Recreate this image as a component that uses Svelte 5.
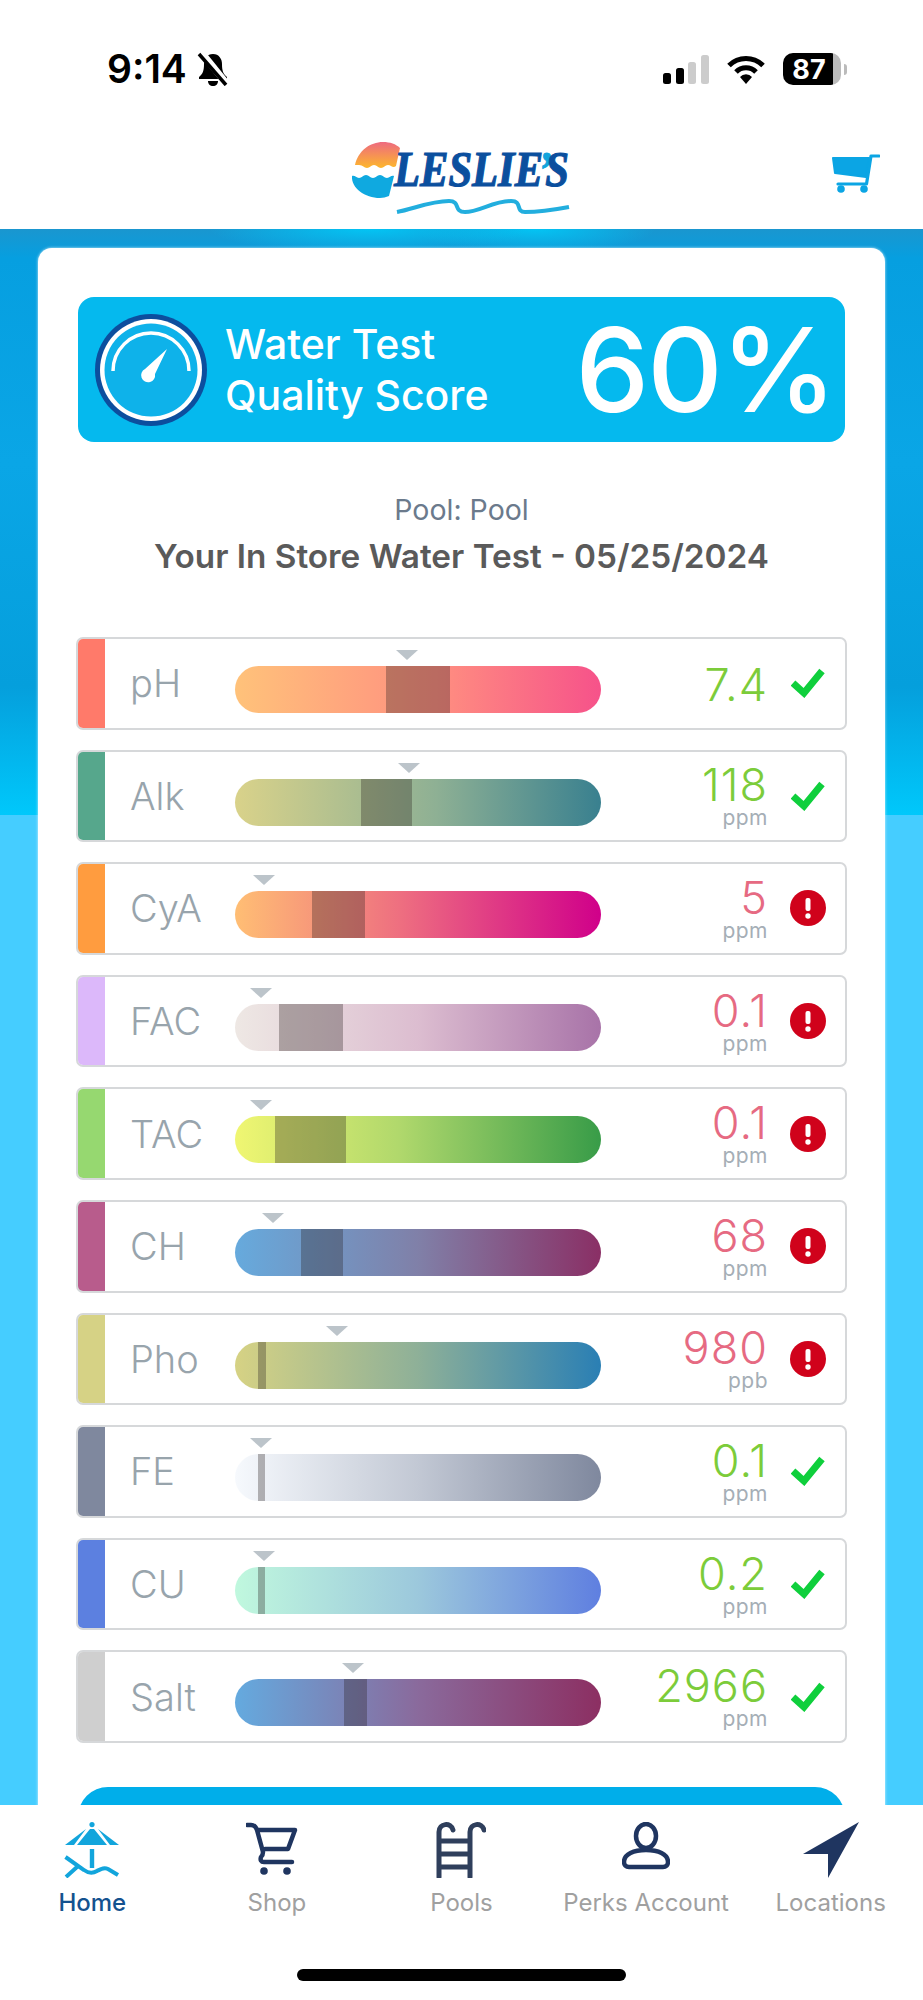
<script>
  const rows = [
    { name: 'pH', swatch: '#ff7a6a', grad: '#ffc27a, #ff8f80 55%, #f6528a', band: [151, 64], tri: 172, value: '7.4', ok: true },
    { name: 'Alk', swatch: '#56a78c', grad: '#d9d28a, #8eb094 55%, #39808f', band: [126, 51], tri: 174, value: '118', unit: 'ppm', ok: true },
    { name: 'CyA', swatch: '#ff9c3f', grad: '#ffbe74, #ee6f80 45%, #d0008a', band: [77, 53], tri: 29, value: '5', unit: 'ppm' },
    { name: 'FAC', swatch: '#dcb8fa', grad: '#eee8e4, #dcbdd0 50%, #a873a8', band: [44, 64], tri: 26, value: '0.1', unit: 'ppm' },
    { name: 'TAC', swatch: '#96d870', grad: '#f0f672, #b0d86c 45%, #389c48', band: [40, 71], tri: 26, value: '0.1', unit: 'ppm' },
    { name: 'CH', swatch: '#b85c8c', grad: '#66aadd, #8080a8 50%, #8a2f65', band: [66, 42], tri: 38, value: '68', unit: 'ppm' },
    { name: 'Pho', swatch: '#d6d285', grad: '#d6d284, #8eb098 50%, #2a7fb4', band: [23, 8], tri: 102, value: '980', unit: 'ppb' },
    { name: 'FE', swatch: '#7f889e', grad: '#f6f9fd, #c2c8d4 50%, #7f889e', band: [23, 7], tri: 26, value: '0.1', unit: 'ppm', ok: true },
    { name: 'CU', swatch: '#5c80e0', grad: '#c0f8de, #9cc8dc 50%, #5f7fe0', band: [23, 7], tri: 29, value: '0.2', unit: 'ppm', ok: true },
    { name: 'Salt', swatch: '#cfcfcf', grad: '#64aadf, #8a6a9c 50%, #8c2f62', band: [109, 23], tri: 118, value: '2966', unit: 'ppm', ok: true }
  ];

  const tabs = ['Home', 'Shop', 'Pools', 'Perks Account', 'Locations'];
</script>

<div class="page">
  <div class="status">
    <div class="clock">
      <span class="time">9:14</span>
      <svg width="32" height="34" viewBox="0 0 32 34">
        <path d="M16 2c-6 0-9 5-9 10 0 6-1 10-5 13v2h28v-2c-4-3-5-7-5-13 0-5-3-10-9-10z" fill="#000" />
        <path d="M11 29h10c0 3-2 5-5 5s-5-2-5-5z" fill="#000" />
        <path d="M4 0l26 32" stroke="#fff" stroke-width="7" />
        <path d="M2 2l27 31" stroke="#000" stroke-width="3.5" />
      </svg>
    </div>
    <div class="indicators">
      <svg width="46" height="29" viewBox="0 0 46 29">
        <rect x="0" y="18" width="8" height="11" rx="2.5" fill="#000" />
        <rect x="13" y="13" width="8" height="16" rx="2.5" fill="#000" />
        <rect x="25" y="7" width="8" height="22" rx="2.5" fill="#ccc" />
        <rect x="38" y="0" width="8" height="29" rx="2.5" fill="#ccc" />
      </svg>
      <svg width="40" height="29" viewBox="0 0 40 29">
        <path d="M3 10.5a24 24 0 0 1 34 0" fill="none" stroke="#000" stroke-width="5" />
        <path d="M10 17a14 14 0 0 1 20 0" fill="none" stroke="#000" stroke-width="5" />
        <path d="M20 29l-6-7a8 8 0 0 1 12 0z" fill="#000" />
      </svg>
      <div class="battery">
        <div class="cell"><span>87</span></div>
        <div class="nub"></div>
      </div>
    </div>
  </div>

  <header class="top">
    <svg class="logo" width="217" height="72" viewBox="0 0 217 72">
      <defs>
        <linearGradient id="sun" x1="0" y1="0" x2="0" y2="1">
          <stop offset="0" stop-color="#ee6a80" />
          <stop offset="1" stop-color="#fdb72c" />
        </linearGradient>
      </defs>
      <path d="M3 23C6 9 18 0 31 0c7 0 13 2 17 6l-4 18c-3 3-5-1-8-1s-4 3-7 3-4-3-7-3-4 3-7 3-4-3-8-3z" fill="url(#sun)" />
      <path d="M0 34c3-1 4 2 7 2s4-3 7-3 4 3 7 3 4-3 7-3 4 3 7 3 4-3 7-2l-5 20c-3 1-6 2-9 2C13 56-1 46 0 34z" fill="#0fa9e0" />
      <text x="42" y="44" font-family="'Liberation Serif', serif" font-weight="700" font-style="italic" font-size="50" fill="#0b4f9e" stroke="#0b4f9e" stroke-width="1.2" textLength="175" lengthAdjust="spacingAndGlyphs">LESLIE<tspan dx="-6" fill="#12a5dc" stroke="#12a5dc">’</tspan><tspan dx="-8">S</tspan></text>
      <path d="M45 70c16-3 34-11 52-11 12 0 4 11 16 11 14 0 28-11 46-11 12 0 4 11 14 11 14 0 28-2 44-5" fill="none" stroke="#22aede" stroke-width="4" />
    </svg>
    <svg class="cart" width="48" height="40" viewBox="0 0 48 40">
      <path d="M1 5H37L34 24 3 20z" fill="#0ba5e4" stroke="#0ba5e4" stroke-width="2" stroke-linejoin="round" />
      <path d="M47 3H39L34.500 31H6" fill="none" stroke="#0ba5e4" stroke-width="3.200" stroke-linejoin="round" stroke-linecap="round" />
      <circle cx="9" cy="36" r="3.800" fill="#0ba5e4" />
      <circle cx="32" cy="36" r="3.800" fill="#0ba5e4" />
    </svg>
  </header>

  <main class="water">
    <section class="card">
      <div class="score">
        <svg width="112" height="112" viewBox="0 0 112 112">
          <circle cx="56" cy="56" r="56" fill="#0c4e9e" />
          <circle cx="56" cy="56" r="51" fill="#fff" />
          <circle cx="56" cy="56" r="46.5" fill="#0eb2ea" />
          <path d="M18 57a38 38 0 0 1 76 0" fill="none" stroke="#fff" stroke-width="3.5" />
          <path d="M72 35L60 60a7 7 0 1 1-10-5z" fill="#fff" />
        </svg>
        <div class="score-title">Water Test<br />Quality Score</div>
        <div class="score-value">60%</div>
      </div>

      <p class="pool">Pool: Pool</p>
      <h1>Your In Store Water Test - 05/25/2024</h1>

      <ul class="tests">
        {#each rows as row}
          <li class="test">
            <span class="swatch" style:background={row.swatch}></span>
            <span class="name">{row.name}</span>
            <div class="track">
              <span class="tri" style:left="{row.tri - 11}px"></span>
              <div class="bar" style:background="linear-gradient(90deg, {row.grad})">
                <span class="band" style:left="{row.band[0]}px" style:width="{row.band[1]}px"></span>
              </div>
            </div>
            <div class="reading" class:good={row.ok}>
              <span class="value">{row.value}</span>
              {#if row.unit}<span class="unit">{row.unit}</span>{/if}
            </div>
            <div class="mark">
              {#if row.ok}
                <svg width="34" height="30" viewBox="0 0 34 30">
                  <path d="M2 15l11 10L31 3" fill="none" stroke="#0fcf3c" stroke-width="7" />
                </svg>
              {:else}
                <svg width="36" height="36" viewBox="0 0 36 36">
                  <circle cx="18" cy="18" r="18" fill="#d0021b" />
                  <rect x="15.5" y="8" width="5" height="13" rx="2" fill="#fff" />
                  <circle cx="18" cy="26" r="2.7" fill="#fff" />
                </svg>
              {/if}
            </div>
          </li>
        {/each}
      </ul>

      <div class="cta"></div>
    </section>
  </main>

  <nav class="tabs">
    {#each tabs as tab, i}
      <div class="tab" class:active={i === 0}>
        <div class="icon">
          {#if i === 0}
            <svg width="56" height="56" viewBox="0 0 56 56">
              <circle cx="28" cy="2.6" r="2.6" fill="#12a5dc" />
              <path d="M1 23L22 7 10 23z" fill="#12a5dc" />
              <path d="M13 23L26 7h4l13 16z" fill="#12a5dc" />
              <path d="M55 23L34 7l12 16z" fill="#12a5dc" />
              <path d="M28 27v19" stroke="#12a5dc" stroke-width="4.4" />
              <path d="M1.5 35L20 48c4 3 8 4 13 1 4-2 7-4 11-2l10 6M2 55l11-10" fill="none" stroke="#12a5dc" stroke-width="4" />
            </svg>
          {:else if i === 1}
            <svg class="shop-icon" width="52" height="54" viewBox="0 0 52 54">
              <path d="M1 3h4c3 0 5 2 6 5l6 22c0 2-1 4-2 5-1 3 0 5 3 5h28M12 8h37l-7 19H19" fill="none" stroke="#1f3560" stroke-width="4.5" stroke-linejoin="round" stroke-linecap="round" />
              <circle cx="18" cy="49" r="3.8" fill="#1f3560" />
              <circle cx="41" cy="49" r="3.8" fill="#1f3560" />
            </svg>
          {:else if i === 2}
            <svg width="50" height="56" viewBox="0 0 50 56">
              <path d="M3 55V10C3 1 15 0 17 8M34 55V10C34 1 46 0 48 8" fill="none" stroke="#2f3f5c" stroke-width="5" stroke-linecap="round" />
              <path d="M3 19h31M3 32h31M3 45h31" stroke="#2f3f5c" stroke-width="5" />
            </svg>
          {:else if i === 3}
            <svg width="48" height="48" viewBox="0 0 48 48">
              <ellipse cx="24" cy="14" rx="10" ry="12" fill="none" stroke="#1f3560" stroke-width="4.5" />
              <path d="M7 45h34c3 0 5-2 5-5 0-8-10-12-22-12S2 32 2 40c0 3 2 5 5 5z" fill="none" stroke="#1f3560" stroke-width="4.5" />
            </svg>
          {:else}
            <svg width="56" height="56" viewBox="0 0 56 56">
              <path d="M56 0L0 32h25v24z" fill="#1f3560" />
            </svg>
          {/if}
        </div>
        <span class="tab-label">{tab}</span>
      </div>
    {/each}
    <div class="home-bar"></div>
  </nav>
</div>

<style>
  :global(body) {
    margin: 0;
    background: #fff;
  }

  .page {
    width: 923px;
    height: 2000px;
    overflow: hidden;
    display: flex;
    flex-direction: column;
    font-family: Inter, "Liberation Sans", sans-serif;
    background: #fff;
  }

  .status {
    height: 118px;
    box-sizing: border-box;
    padding: 50px 76px 0 107px;
    display: flex;
    justify-content: space-between;
    align-items: flex-start;
    flex-shrink: 0;
  }

  .clock {
    display: flex;
    align-items: center;
    gap: 10px;
  }

  .time {
    font-size: 39px;
    line-height: 38px;
    font-weight: 600;
    color: #000;
  }

  .indicators {
    display: flex;
    align-items: center;
    gap: 17px;
    padding-top: 3px;
  }

  .battery {
    display: flex;
    align-items: center;
    gap: 3px;
  }

  .cell {
    width: 58px;
    height: 32px;
    border-radius: 10px;
    background: linear-gradient(90deg, #000 87%, #bbb 87%);
    display: flex;
    align-items: center;
    justify-content: center;
  }

  .cell span {
    color: #fff;
    font-size: 27px;
    font-weight: 700;
    padding-right: 6px;
  }

  .nub {
    width: 3px;
    height: 11px;
    border-radius: 0 3px 3px 0;
    background: #bbb;
  }

  .top {
    height: 111px;
    flex-shrink: 0;
    position: relative;
    display: flex;
    justify-content: center;
    align-items: flex-start;
    padding-top: 24px;
    box-sizing: border-box;
  }

  .logo {
    margin-left: -3px;
    overflow: visible;
  }

  .cart {
    position: absolute;
    right: 43px;
    top: 35px;
  }

  .water {
    flex: 1;
    min-height: 0;
    overflow: hidden;
    padding: 19px 38px 0;
    background-color: #45cdff;
    background-image:
      radial-gradient(ellipse 160px 24px at 40% 0, #03c4f4, transparent),
      radial-gradient(ellipse 120px 24px at 58% 0, #03c4f4, transparent),
      linear-gradient(180deg, #1a96cf, #069fe0 5%, #0aa6e6 40%, #059fdc 78%, #00c8fb 100%);
    background-size: 100% 586px;
    background-repeat: no-repeat;
  }

  .card {
    background: #fff;
    border-radius: 14px 14px 0 0;
    box-shadow: 0 0 3px rgba(255, 255, 255, 0.8);
    padding: 49px 38px 0 38px;
    min-height: 1700px;
  }

  .score {
    height: 145px;
    margin: 0 2px;
    padding: 0 10px 0 17px;
    border-radius: 16px;
    background: #05b9ee;
    color: #fff;
    display: flex;
    align-items: center;
  }

  .score-title {
    margin-left: 18px;
    font-size: 41px;
    line-height: 51px;
    font-weight: 500;
  }

  .score-value {
    margin-left: auto;
    font-size: 117px;
    line-height: 1;
    font-weight: 500;
    letter-spacing: -2px;
  }

  .pool {
    margin: 52px 0 0;
    text-align: center;
    font-size: 28.5px;
    line-height: 32px;
    color: #6b7a8c;
  }

  h1 {
    margin: 11px 0 0;
    text-align: center;
    font-size: 33.3px;
    line-height: 38px;
    font-weight: 600;
    color: #5a5a5a;
  }

  .tests {
    list-style: none;
    margin: 62px 0 0;
    padding: 0;
    display: flex;
    flex-direction: column;
    gap: 20px;
  }

  .test {
    height: 92.6px;
    box-sizing: border-box;
    border: 2.5px solid #d6d8da;
    border-radius: 7px;
    display: flex;
    align-items: stretch;
    overflow: hidden;
  }

  .swatch {
    width: 27px;
    flex-shrink: 0;
  }

  .name {
    width: 130px;
    box-sizing: border-box;
    padding-left: 25px;
    flex-shrink: 0;
    align-self: center;
    font-size: 38px;
    font-weight: 300;
    color: #98a4ac;
  }

  .track {
    position: relative;
    width: 366px;
    flex-shrink: 0;
    padding-top: 27px;
  }

  .tri {
    position: absolute;
    top: 11px;
    width: 0;
    height: 0;
    border-left: 11px solid transparent;
    border-right: 11px solid transparent;
    border-top: 10px solid #bcc4ca;
  }

  .bar {
    position: relative;
    height: 47px;
    border-radius: 24px;
    overflow: hidden;
  }

  .band {
    position: absolute;
    top: 0;
    bottom: 0;
    background: rgba(40, 30, 30, 0.32);
  }

  .reading {
    width: 167px;
    flex-shrink: 0;
    display: flex;
    flex-direction: column;
    justify-content: center;
    align-items: flex-end;
    color: #e66a82;
    padding-top: 3px;
  }

  .reading.good {
    color: #7ccc3a;
  }

  .value {
    font-size: 45px;
    line-height: 42px;
    font-weight: 300;
    letter-spacing: 1px;
  }

  .unit {
    font-size: 21px;
    line-height: 24px;
    color: #a5aeb6;
    letter-spacing: 0.5px;
  }

  .mark {
    flex: 1;
    display: flex;
    align-items: center;
    justify-content: center;
    padding-left: 2px;
  }

  .cta {
    height: 60px;
    margin: 44px 2px 0;
    border-radius: 30px 30px 0 0;
    background: #00aeea;
  }

  .tabs {
    position: relative;
    height: 195px;
    flex-shrink: 0;
    background: #fff;
    display: grid;
    grid-template-columns: repeat(5, 1fr);
  }

  .tab {
    display: flex;
    flex-direction: column;
    align-items: center;
    padding-top: 17px;
  }

  .icon {
    height: 62px;
    display: flex;
    align-items: flex-start;
    justify-content: center;
  }

  .shop-icon {
    margin-left: -10px;
  }

  .tab-label {
    margin-top: 5px;
    font-size: 24px;
    line-height: 28px;
    color: #a0a0a0;
    white-space: nowrap;
  }

  .tab.active .tab-label {
    color: #14528f;
    font-weight: 500;
  }

  .home-bar {
    position: absolute;
    left: 297px;
    top: 164px;
    width: 329px;
    height: 12px;
    border-radius: 6px;
    background: #000;
  }
</style>
